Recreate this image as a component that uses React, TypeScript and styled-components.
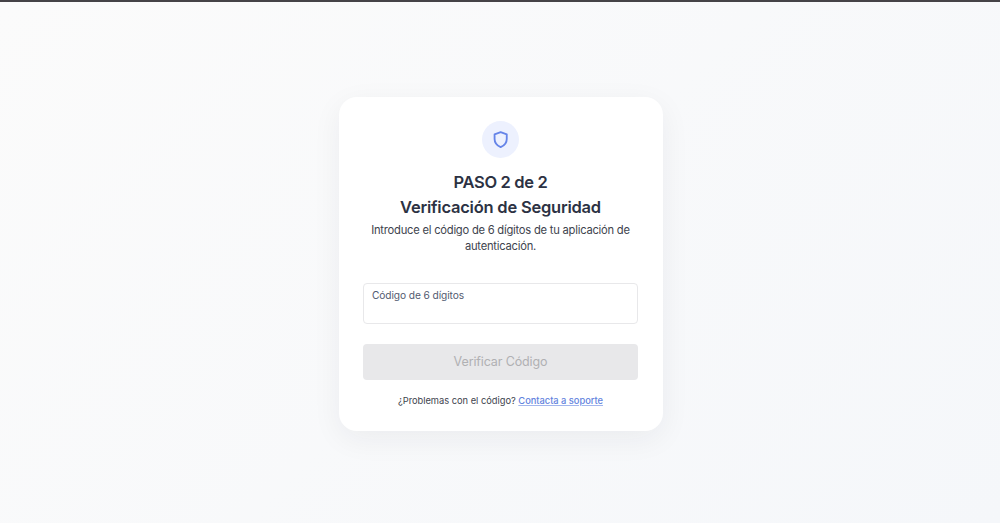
import React from "react";
import styled, { createGlobalStyle } from "styled-components";

const GlobalStyle = createGlobalStyle`
  * {
    box-sizing: border-box;
  }

  body {
    margin: 0;
    font-family: Inter, "Liberation Sans", sans-serif;
    color: #2c3243;
  }
`;

const Page = styled.main`
  display: flex;
  flex-direction: column;
  align-items: center;
  height: 100vh;
  padding: 94.5px 0 0 1px;
  overflow: hidden;
  border-top: 2px solid #454347;
  background: linear-gradient(135deg, #fbfbfb 0%, #f5f7fa 100%);
`;

const Card = styled.section`
  display: flex;
  flex-direction: column;
  align-items: center;
  width: 324px;
  height: 334.5px;
  padding: 24.5px;
  border-radius: 18px;
  background: #fff;
  box-shadow: 0 8px 30px rgba(30, 35, 50, 0.06);
`;

const IconCircle = styled.div`
  display: flex;
  align-items: center;
  justify-content: center;
  width: 37px;
  height: 37px;
  flex-shrink: 0;
  border-radius: 50%;
  background: #edf1fe;
  color: #6584e8;
`;

const Title = styled.h1`
  display: flex;
  flex-direction: column;
  align-items: center;
  margin: 12px 0 0;
  font-size: 16.5px;
  font-weight: 600;
  line-height: 24.5px;
  white-space: nowrap;
`;

const TitleLine = styled.span<{ $spacing: number }>`
  letter-spacing: ${({ $spacing }) => $spacing}px;
`;

const Description = styled.p`
  margin: 3px 0 0;
  color: #40444e;
  font-size: 11.2px;
  line-height: 16px;
  letter-spacing: -0.23px;
  text-align: center;
  white-space: nowrap;
`;

const Form = styled.form`
  display: flex;
  flex-direction: column;
  gap: 20px;
  width: 100%;
  margin-top: 28.5px;
`;

const Field = styled.label`
  display: flex;
  flex-direction: column;
  height: 41px;
  padding: 4px 8px;
  border: 1px solid #e8e8ea;
  border-radius: 4px;
  color: #535a70;
  font-size: 10.2px;
  line-height: 14px;
  letter-spacing: -0.1px;
`;

const CodeInput = styled.input`
  width: 100%;
  height: 18px;
  padding: 0;
  border: 0;
  outline: 0;
  background: transparent;
  font: inherit;
`;

const SubmitButton = styled.button`
  height: 36px;
  padding: 0;
  border: 0;
  border-radius: 4px;
  background: #e8e8ea;
  color: #b0b0b3;
  font-family: inherit;
  font-size: 12.5px;
  letter-spacing: -0.13px;
`;

const Help = styled.p`
  margin: 14.5px 0 0;
  color: #40444e;
  font-size: 9.3px;
  line-height: 14px;
  letter-spacing: -0.01px;
  white-space: nowrap;
`;

const SupportLink = styled.a`
  color: #6283de;
  font-weight: 500;
  text-decoration: underline;
  text-decoration-color: #a3b6ec;
  text-underline-offset: 1px;
  text-decoration-thickness: 1px;
`;

const ShieldIcon = () => (
  <svg width="20" height="20" viewBox="0 0 24 24" fill="none">
    <path
      d="M11.6 2.5 18.9 5.2v5.7c0 4.4-2.8 7.9-7.3 9.7-4.5-1.8-7.3-5.3-7.3-9.7V5.2z"
      stroke="currentColor"
      strokeWidth="2.2"
      strokeLinejoin="round"
    />
  </svg>
);

const App = () => {
  return (
    <>
      <GlobalStyle />
      <Page>
        <Card>
          <IconCircle>
            <ShieldIcon />
          </IconCircle>
          <Title>
            <TitleLine $spacing={-0.35}>PASO 2 de 2</TitleLine>
            <TitleLine $spacing={-0.22}>Verificación de Seguridad</TitleLine>
          </Title>
          <Description>
            Introduce el código de 6 dígitos de tu aplicación de
            <br />
            autenticación.
          </Description>
          <Form>
            <Field>
              Código de 6 dígitos
              <CodeInput inputMode="numeric" maxLength={6} />
            </Field>
            <SubmitButton type="submit" disabled>
              Verificar Código
            </SubmitButton>
          </Form>
          <Help>
            ¿Problemas con el código?{" "}
            <SupportLink href="#">Contacta a soporte</SupportLink>
          </Help>
        </Card>
      </Page>
    </>
  );
};

export default App;
